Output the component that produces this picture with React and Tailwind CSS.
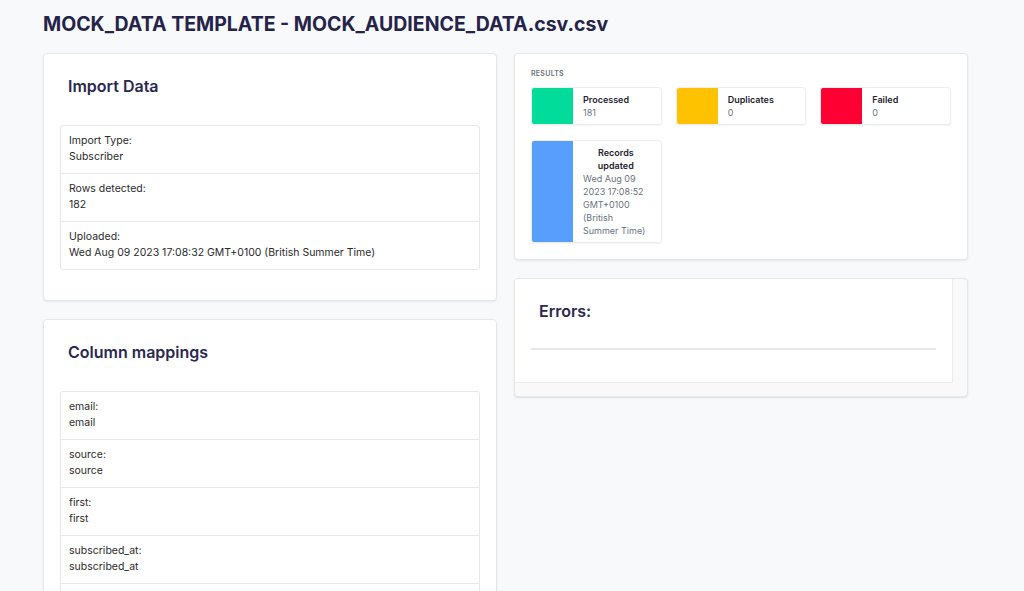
import React from "react";

const importRows = [
  { label: "Import Type:", value: "Subscriber" },
  { label: "Rows detected:", value: "182" },
  { label: "Uploaded:", value: "Wed Aug 09 2023 17:08:32 GMT+0100 (British Summer Time)" },
];

const mappingRows = [
  { label: "email:", value: "email" },
  { label: "source:", value: "source" },
  { label: "first:", value: "first" },
  { label: "subscribed_at:", value: "subscribed_at" },
];

const tiles = [
  { title: "Processed", value: "181", color: "bg-[#02dc9a]" },
  { title: "Duplicates", value: "0", color: "bg-[#ffc200]" },
  { title: "Failed", value: "0", color: "bg-[#ff0033]" },
];

const DetailTable = ({ rows, openEnd }) => (
  <div className="border border-[#e6e7eb] rounded-[3px] bg-white">
    {rows.map((row, i) => (
      <div
        key={row.label}
        className={`px-[8px] pt-[7px] text-[10.5px] leading-[16px] text-[#2a2a2a] ${
          i > 0 ? "h-[48px] border-t border-[#e6e7eb]" : "h-[47px]"
        }`}
      >
        <div>{row.label}</div>
        <div>{row.value}</div>
      </div>
    ))}
    {openEnd && <div className="h-[48px] border-t border-[#e6e7eb]" />}
  </div>
);

const Card = ({ title, children }) => (
  <div className="bg-white border border-[#e5e7eb] rounded-[4px] shadow-[0_1px_2px_rgba(0,0,0,0.08)] px-[16px] pt-[20px] pb-[30px]">
    <h2 className="px-[8px] h-[24px] leading-[24px] text-[16px] font-semibold text-[#2b2850] mb-[27px]">
      {title}
    </h2>
    {children}
  </div>
);

const Tile = ({ color, children }) => (
  <div className="flex bg-white border border-[#eceef1] rounded-[3px] shadow-[0_1px_2px_rgba(0,0,0,0.06)] overflow-hidden">
    <div className={`w-[41px] shrink-0 ${color}`} />
    <div className="flex-1 pl-[10px] pr-[6px] pt-[5px] pb-[5px] text-[9px] leading-[13px]">
      {children}
    </div>
  </div>
);

export default function App() {
  return (
    <div
      className="h-screen overflow-hidden bg-[#f8f9fb] px-[43px] pt-[10px]"
      style={{ fontFamily: "Inter, 'Liberation Sans', sans-serif" }}
    >
      <h1 className="text-[19.5px] leading-[28px] font-bold text-[#26234a] mb-[15px]">
        MOCK_DATA TEMPLATE - MOCK_AUDIENCE_DATA.csv.csv
      </h1>

      <div className="grid grid-cols-[454px_454px] gap-x-[17px] items-start">
        <div className="flex flex-col gap-[18px]">
          <Card title="Import Data">
            <DetailTable rows={importRows} />
          </Card>
          <Card title="Column mappings">
            <DetailTable rows={mappingRows} openEnd />
          </Card>
        </div>

        <div className="flex flex-col gap-[18px]">
          <div className="bg-white border border-[#e5e7eb] rounded-[4px] shadow-[0_1px_2px_rgba(0,0,0,0.08)] px-[16px] pt-[14px] pb-[16px]">
            <div className="text-[7px] leading-[12px] font-semibold tracking-[0.04em] text-[#6b7280] uppercase mb-[7px]">
              Results
            </div>
            <div className="grid grid-cols-3 gap-x-[14px] gap-y-[15px]">
              {tiles.map((t) => (
                <Tile key={t.title} color={t.color}>
                  <div className="font-semibold text-[#1f2430]">{t.title}</div>
                  <div className="text-[#6b7280]">{t.value}</div>
                </Tile>
              ))}
              <Tile color="bg-[#589efc]">
                <div className="font-semibold text-[#1f2430] text-center pr-[6px]">
                  Records
                  <br />
                  updated
                </div>
                <div className="text-[#6b7280]">
                  Wed Aug 09
                  <br />
                  2023 17:08:52
                  <br />
                  GMT+0100
                  <br />
                  (British
                  <br />
                  Summer Time)
                </div>
              </Tile>
            </div>
          </div>

          <div className="bg-[#f9f9fa] border border-[#e5e7eb] rounded-[4px] shadow-[0_1px_2px_rgba(0,0,0,0.1)] overflow-hidden">
            <div className="bg-white mr-[14px] mb-[13px] border-r border-b border-[#ececee] px-[16px] pt-[20px] pb-[32px]">
              <h2 className="px-[8px] h-[24px] leading-[24px] text-[16px] font-semibold text-[#2b2850] mb-[25px]">
                Errors:
              </h2>
              <div className="h-[2px] bg-[#e6e7eb]" />
            </div>
          </div>
        </div>
      </div>
    </div>
  );
}
